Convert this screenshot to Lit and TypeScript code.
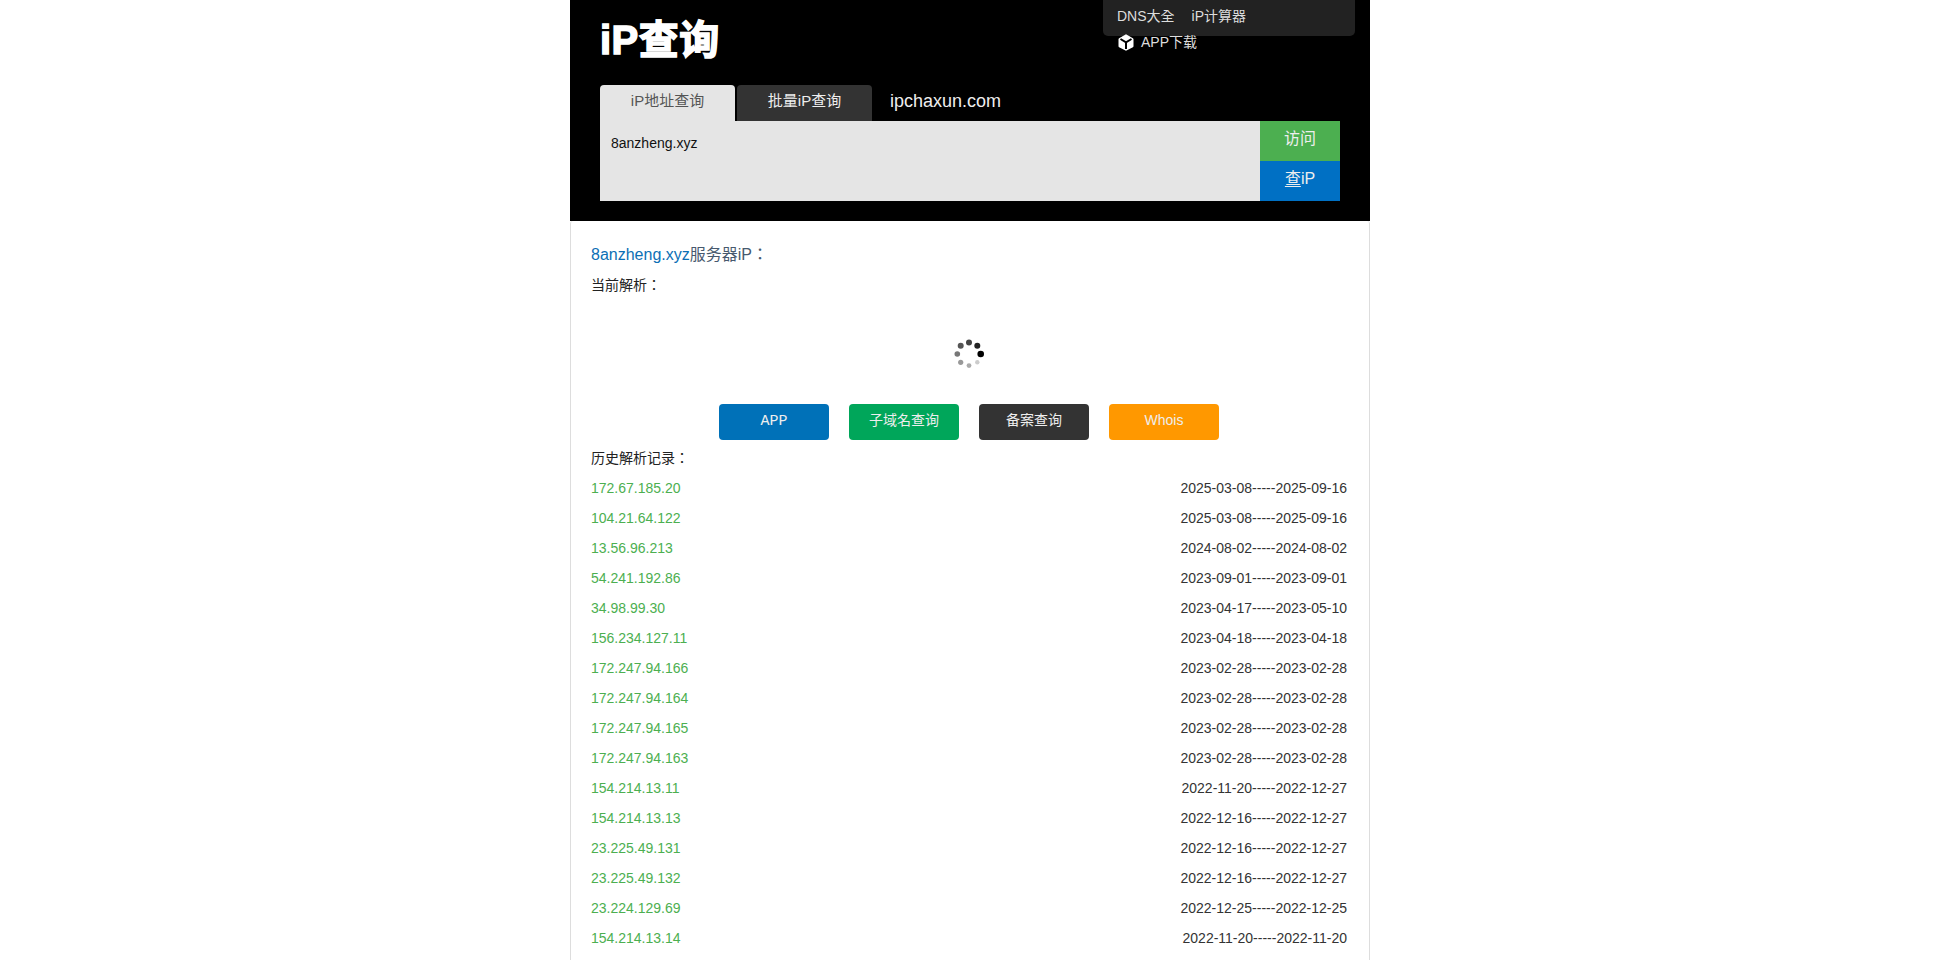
import { LitElement, html, css, svg } from "lit";
import { customElement } from "lit/decorators.js";

const RECORDS: [string, string][] = [
  ["172.67.185.20", "2025-03-08-----2025-09-16"],
  ["104.21.64.122", "2025-03-08-----2025-09-16"],
  ["13.56.96.213", "2024-08-02-----2024-08-02"],
  ["54.241.192.86", "2023-09-01-----2023-09-01"],
  ["34.98.99.30", "2023-04-17-----2023-05-10"],
  ["156.234.127.11", "2023-04-18-----2023-04-18"],
  ["172.247.94.166", "2023-02-28-----2023-02-28"],
  ["172.247.94.164", "2023-02-28-----2023-02-28"],
  ["172.247.94.165", "2023-02-28-----2023-02-28"],
  ["172.247.94.163", "2023-02-28-----2023-02-28"],
  ["154.214.13.11", "2022-11-20-----2022-12-27"],
  ["154.214.13.13", "2022-12-16-----2022-12-27"],
  ["23.225.49.131", "2022-12-16-----2022-12-27"],
  ["23.225.49.132", "2022-12-16-----2022-12-27"],
  ["23.224.129.69", "2022-12-25-----2022-12-25"],
  ["154.214.13.14", "2022-11-20-----2022-11-20"],
];

const DOTS: [number, number, number, string][] = [
  [21.7, 12, 3.3, "#000"],
  [18.3, 3.7, 3, "#222"],
  [10, 0.4, 3, "#444"],
  [1.7, 3.7, 3, "#555"],
  [-1.7, 12, 2.8, "#777"],
  [1.7, 20.3, 2.6, "#999"],
  [10, 23.6, 2.4, "#aaa"],
  [18.3, 20.3, 2.2, "#ccc"],
];

@customElement("app-root")
export class AppRoot extends LitElement {
  static styles = css`
    :host {
      display: block;
      height: 100vh;
      overflow: hidden;
      background: #fff;
      font-family: "Liberation Sans", "Noto Sans CJK TC", sans-serif;
      font-size: 14px;
      color: #333;
    }
    .page {
      width: 800px;
      margin: 0 auto;
    }
    .head {
      position: relative;
      background: #000;
      height: 221px;
      padding: 0 30px 20px;
      box-sizing: border-box;
      display: flex;
      flex-direction: column;
      justify-content: flex-end;
    }
    .logo {
      position: absolute;
      left: 30px;
      top: 15px;
      font-size: 40px;
      line-height: 50px;
      font-weight: 700;
      color: #fff;
      letter-spacing: 0.5px;
      -webkit-text-stroke: 1.5px #fff;
    }
    .menu {
      position: absolute;
      left: 533px;
      top: 0;
      width: 252px;
      height: 36px;
      background: #222;
      border-radius: 0 0 5px 5px;
      box-sizing: border-box;
      padding: 0 14px 4px;
      display: flex;
      gap: 17px;
      align-items: center;
      color: #ddd;
      font-size: 14px;
      line-height: 32px;
    }
    .app {
      position: absolute;
      left: 548px;
      top: 33px;
      display: flex;
      align-items: center;
      gap: 7px;
      color: #ddd;
      font-size: 14px;
      line-height: 18px;
    }
    .app svg { display: block; }
    .tabs {
      display: flex;
      gap: 2px;
      align-items: stretch;
      height: 36px;
    }
    .tab {
      width: 135px;
      border-radius: 4px 4px 0 0;
      text-align: center;
      line-height: 32px;
      font-size: 15px;
    }
    .tab.on { background: #e5e5e5; color: #555; }
    .tab.off { background: #333; color: #eee; }
    .domain {
      color: #eee;
      font-size: 18px;
      line-height: 32px;
      margin-left: 16px;
    }
    .search {
      display: flex;
      height: 80px;
      background: #e5e5e5;
    }
    .input {
      flex: 1;
      padding: 12px 11px;
      font-size: 14px;
      line-height: 20px;
      color: #111;
    }
    .actions {
      width: 80px;
      display: flex;
      flex-direction: column;
    }
    .act {
      height: 40px;
      line-height: 36px;
      text-align: center;
      color: #eee;
      font-size: 16px;
    }
    .act.visit { background: #4caf50; }
    .act.query { background: #0070c4; }
    .act.query span { text-decoration: underline; text-underline-offset: 2px; }
    .card {
      border: 1px solid #ddd;
      border-top: 0;
      border-radius: 3px 3px 0 0;
      padding: 23px 22px 0 20px;
      min-height: 800px;
      box-sizing: border-box;
    }
    .title {
      font-size: 16px;
      line-height: 22px;
      color: #47596e;
    }
    .title a { color: #0c6fb5; }
    .label {
      font-size: 14px;
      line-height: 20px;
      color: #222;
    }
    .current { margin-top: 9px; }
    .spin {
      display: flex;
      justify-content: center;
      padding-top: 47px;
      height: 85px;
      box-sizing: border-box;
      margin-bottom: 24px;
    }
    .spin svg { overflow: visible; display: block; }
    .btns {
      display: flex;
      justify-content: center;
      gap: 20px;
    }
    .btn {
      width: 110px;
      height: 36px;
      border-radius: 4px;
      color: #eee;
      text-align: center;
      line-height: 32px;
      font-size: 14px;
    }
    .b1 { background: #0071b8; font-family: "Liberation Mono", monospace; font-size: 15px; line-height: 36px; }
    .b2 { background: #00a65a; }
    .b3 { background: #333; }
    .b4 { background: #ff9800; }
    .history { margin-top: 8px; }
    .rows { margin-top: 5px; }
    .row {
      display: flex;
      justify-content: space-between;
      height: 30px;
      line-height: 30px;
      font-size: 14px;
    }
    .ip { color: #4caf50; }
    .date { color: #333; }
  `;

  render() {
    return html`
      <div class="page">
        <header class="head">
          <div class="logo">iP查询</div>
          <nav class="menu"><span>DNS大全</span><span>iP计算器</span></nav>
          <div class="app">
            <svg width="16" height="17" viewBox="0 0 16 17">
              <path fill="#fff" d="M8 .3l6.9 3.9q.6.4.6 1v7q0 .7-.6 1l-6.9 3.5-6.9-3.5q-.6-.3-.6-1v-7q0-.6.6-1z" />
              <path fill="none" stroke="#000" stroke-width="2" d="M2.5 5L8 8.3 13.5 5M8 8.3V15" />
            </svg>
            <span>APP下载</span>
          </div>
          <div class="tabs">
            <div class="tab on">iP地址查询</div>
            <div class="tab off">批量iP查询</div>
            <div class="domain">ipchaxun.com</div>
          </div>
          <div class="search">
            <div class="input">8anzheng.xyz</div>
            <div class="actions">
              <div class="act visit">访问</div>
              <div class="act query"><span>查</span>iP</div>
            </div>
          </div>
        </header>
        <main class="card">
          <div class="title"><a>8anzheng.xyz</a>服务器iP：</div>
          <div class="label current">当前解析：</div>
          <div class="spin">
            <svg width="20" height="24" viewBox="0 0 20 24">
              ${DOTS.map(([x, y, r, c]) => svg`<circle cx=${x} cy=${y} r=${r} fill=${c} />`)}
            </svg>
          </div>
          <div class="btns">
            <div class="btn b1">APP</div>
            <div class="btn b2">子域名查询</div>
            <div class="btn b3">备案查询</div>
            <div class="btn b4">Whois</div>
          </div>
          <div class="label history">历史解析记录：</div>
          <div class="rows">
            ${RECORDS.map(
              ([ip, d]) => html`<div class="row"><span class="ip">${ip}</span><span class="date">${d}</span></div>`
            )}
          </div>
        </main>
      </div>
    `;
  }
}
